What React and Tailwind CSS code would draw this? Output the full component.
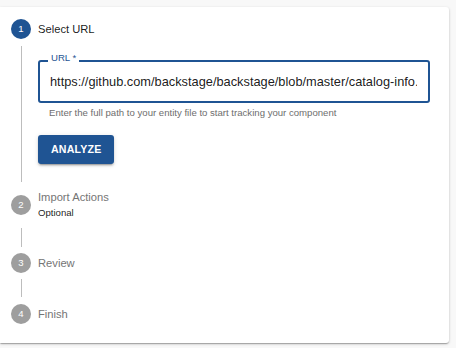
const StepIcon = ({ n, active }) => (
  <div
    className={`w-[20px] h-[20px] rounded-full flex items-center justify-center text-white text-[9.6px] shrink-0 ${
      active ? "bg-[#1f5493]" : "bg-[#9e9e9e]"
    }`}
  >
    {n}
  </div>
);

const Connector = ({ className }) => (
  <div className={`ml-[10px] border-l border-[#bdbdbd] ${className}`} />
);

export default function App() {
  return (
    <div className="w-[456px] h-[348px] bg-[#f8f8f8] pt-[7px] overflow-hidden font-['Liberation_Sans',Arial,sans-serif]">
      <div className="w-[449px] h-[336px] bg-white rounded-r-[3px] shadow-[0_1px_3px_rgba(0,0,0,0.2),0_1px_1px_rgba(0,0,0,0.14),0_2px_1px_-1px_rgba(0,0,0,0.12)] pl-[11px] pt-[12px]">
        {/* Step 1 */}
        <div className="flex items-center h-[20px] gap-[7px]">
          <StepIcon n="1" active />
          <span className="text-[11.2px] text-black/90">Select URL</span>
        </div>
        <div className="ml-[10px] mt-[7px] border-l border-[#bdbdbd] pl-[16px] pt-[14px] pb-[18px]">
          <div className="relative w-[392px] h-[43px] border-2 border-[#1f5493] rounded-[3px] pl-[10px] pr-[11px] flex items-center">
            <span className="absolute top-[-9px] left-[8px] bg-white px-[3px] text-[9.6px] leading-[9.6px] text-[#1f5493]">
              URL *
            </span>
            <div className="overflow-hidden whitespace-nowrap text-[12.8px] text-black/90">
              https://github.com/backstage/backstage/blob/master/catalog-info.yaml
            </div>
          </div>
          <div className="mt-[3px] ml-[11px] text-[9.6px] leading-[14px] text-[#6e6e6e]">
            Enter the full path to your entity file to start tracking your component
          </div>
          <button className="mt-[15px] h-[29px] px-[13px] bg-[#1f5493] rounded-[3px] text-white font-bold text-[10.6px] tracking-[0.2px] shadow-[0_3px_1px_-2px_rgba(0,0,0,0.2),0_2px_2px_rgba(0,0,0,0.14),0_1px_5px_rgba(0,0,0,0.12)]">
            ANALYZE
          </button>
        </div>

        {/* Step 2 */}
        <div className="flex items-center gap-[7px] mt-[8px]">
          <StepIcon n="2" />
          <div className="flex flex-col">
            <span className="text-[11.2px] leading-[15px] text-[#757575]">Import Actions</span>
            <span className="text-[9.6px] leading-[15px] text-black/90">Optional</span>
          </div>
        </div>
        <Connector className="mt-[8px] h-[19px]" />

        {/* Step 3 */}
        <div className="flex items-center h-[20px] gap-[7px] mt-[6px]">
          <StepIcon n="3" />
          <span className="text-[11.2px] text-[#757575]">Review</span>
        </div>
        <Connector className="mt-[6px] h-[18px]" />

        {/* Step 4 */}
        <div className="flex items-center h-[20px] gap-[7px] mt-[7px]">
          <StepIcon n="4" />
          <span className="text-[11.2px] text-[#757575]">Finish</span>
        </div>
      </div>
    </div>
  );
}
